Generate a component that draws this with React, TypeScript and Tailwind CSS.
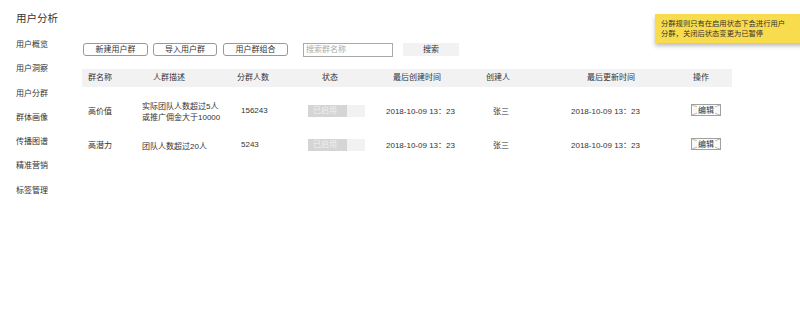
import React from 'react';

const font = { fontFamily: '"Liberation Sans", "Noto Sans CJK SC", sans-serif' };

const menu = ['用户概览', '用户洞察', '用户分群', '群体画像', '传播图谱', '精准营销', '标签管理'];

interface Group {
  name: string;
  desc: string[];
  count: string;
  created: string;
  creator: string;
  updated: string;
}

const groups: Group[] = [
  {
    name: '高价值',
    desc: ['实际团队人数超过5人', '或推广佣金大于10000'],
    count: '156243',
    created: '2018-10-09 13：23',
    creator: '张三',
    updated: '2018-10-09 13：23',
  },
  {
    name: '高潜力',
    desc: ['团队人数超过20人'],
    count: '5243',
    created: '2018-10-09 13：23',
    creator: '张三',
    updated: '2018-10-09 13：23',
  },
];

function Toggle() {
  return (
    <div className="flex h-[12px] w-[57px]">
      <div className="flex w-[39px] items-center bg-[#d5d5d5] pl-[5px] text-[8px] leading-none text-[#f0f0f0]">
        已启用
      </div>
      <div className="flex-1 bg-[#f2f2f2]" />
    </div>
  );
}

// placeholder-style edit button with crossed lines
function EditButton() {
  return (
    <div className="relative h-[12px] w-[30px] border border-[#a0a0a0] bg-[#fafafa]">
      <svg className="absolute inset-0 h-full w-full" viewBox="0 0 28 10" preserveAspectRatio="none">
        <line x1="0" y1="0" x2="28" y2="10" stroke="#a8a8a8" strokeWidth="0.8" />
        <line x1="28" y1="0" x2="0" y2="10" stroke="#a8a8a8" strokeWidth="0.8" />
      </svg>
      <div className="absolute inset-0 flex items-center justify-center">
        <span className="bg-white px-[1px] text-[8px] leading-[9px] text-[#333]">编辑</span>
      </div>
    </div>
  );
}

export default function App() {
  return (
    <div className="relative h-[315px] w-[800px] overflow-hidden bg-white text-[#333]" style={font}>
      {/* Title */}
      <div className="pl-4 pt-[11px] text-[10.5px] leading-[14px] text-[#333]">用户分析</div>

      <div className="flex">
        {/* Sidebar */}
        <div className="w-[82px] pl-4 pt-[8px]">
          {menu.map((m) => (
            <div key={m} className="h-[24.3px] text-[8px] leading-[24px]">
              {m}
            </div>
          ))}
        </div>

        {/* Main */}
        <div className="w-[650px] pt-[18px]">
          {/* Toolbar */}
          <div className="flex h-[13px] items-center text-[8px]">
            <button className="ml-[1px] flex h-[13px] w-[65px] items-center justify-center rounded-[3px] border border-[#999]">
              新建用户群
            </button>
            <button className="ml-[5px] flex h-[13px] w-[64px] items-center justify-center rounded-[3px] border border-[#999]">
              导入用户群
            </button>
            <button className="ml-[6px] flex h-[13px] w-[65px] items-center justify-center rounded-[3px] border border-[#999]">
              用户群组合
            </button>
            <div className="ml-[15px] flex h-[14px] w-[90px] items-center border border-[#aaa] pl-[2px] text-[#aaa]">
              搜索群名称
            </div>
            <button className="ml-[10px] flex h-[13px] w-[56px] items-center justify-center bg-[#f2f2f2]">
              搜索
            </button>
          </div>

          {/* Table header */}
          <div className="mt-[13px] flex h-[18px] items-center bg-[#f2f2f2] text-[8px]">
            <div className="w-[58px] pl-[6px]">群名称</div>
            <div className="w-[90px] pl-[13px]">人群描述</div>
            <div className="w-[70px] pl-[7px]">分群人数</div>
            <div className="w-[80px] pl-[22px]">状态</div>
            <div className="w-[90px] pl-[13px]">最后创建时间</div>
            <div className="w-[90px] pl-[16px]">创建人</div>
            <div className="w-[120px] pl-[27px]">最后更新时间</div>
            <div className="w-[52px] pl-[13px]">操作</div>
          </div>

          {/* Rows */}
          <div className="pt-[7px]">
            {groups.map((g, i) => (
              <div key={g.name} className={`flex items-center text-[8px] ${i === 0 ? 'h-[36px]' : 'h-[32px]'}`}>
                <div className="w-[58px] pl-[6px]">{g.name}</div>
                <div className="w-[90px] pl-[2px] leading-[11px]">
                  {g.desc.map((d) => (
                    <div key={d}>{d}</div>
                  ))}
                </div>
                <div className="w-[70px] pb-[2px] pl-[11px]">{g.count}</div>
                <div className="w-[80px] pb-[2px] pl-[8px]">
                  <Toggle />
                </div>
                <div className="w-[90px] pl-[6px]">{g.created}</div>
                <div className="w-[90px] pl-[23px]">{g.creator}</div>
                <div className="w-[120px] pl-[11px]">{g.updated}</div>
                <div className="w-[52px] pb-[4px] pl-[11px]">
                  <EditButton />
                </div>
              </div>
            ))}
          </div>
        </div>
      </div>

      {/* Note */}
      <div className="absolute left-[655px] top-[14px] w-[150px] bg-[#f8dc4d] pb-[5px] pl-[6px] pt-[5px] text-[7.3px] leading-[9.5px] text-[#333] shadow-[0_3px_4px_rgba(0,0,0,0.25)]">
        <div>分群规则只有在启用状态下会进行用户</div>
        <div>分群，关闭后状态变更为已暂停</div>
      </div>
    </div>
  );
}
